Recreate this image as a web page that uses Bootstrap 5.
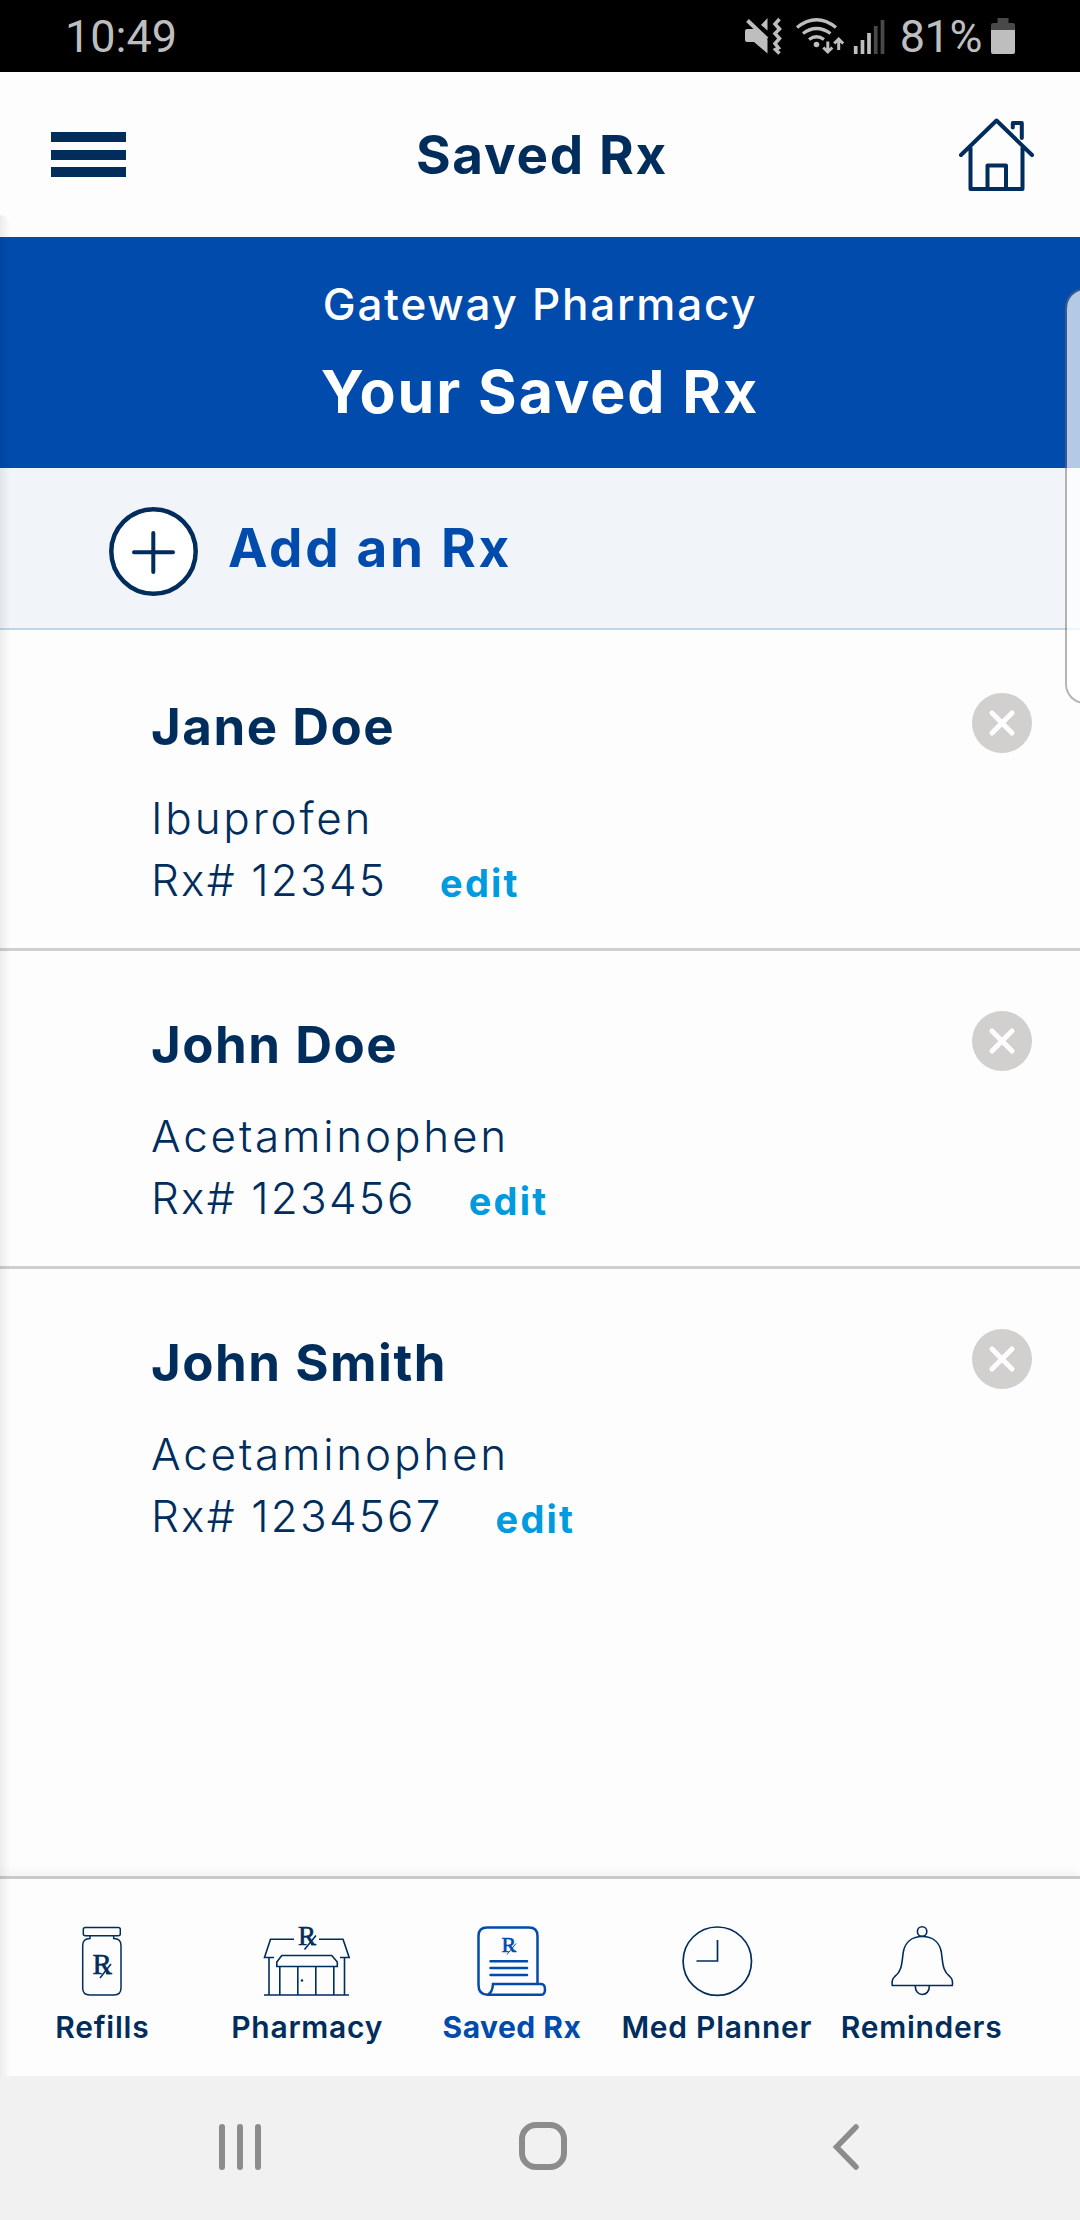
<!DOCTYPE html>
<html lang="en">
<head>
<meta charset="utf-8">
<meta name="viewport" content="width=device-width, initial-scale=1">
<title>Saved Rx</title>
<link href="https://cdn.jsdelivr.net/npm/bootstrap@5.3.0/dist/css/bootstrap.min.css" rel="stylesheet">
<style>
  :root { --navy: #002d5c; --blue: #004bac; --sky: #009ade; }
  body { font-family: Inter, "Open Sans", sans-serif; color: var(--navy); background: #fdfdfd; }
  svg { display: block; flex: none; overflow: visible; }
  .phone { width: 1080px; height: 2220px; overflow: hidden; background: #fdfdfd; }
  .status-bar { height: 72px; background: #000; color: #bebebe; font: 400 45px/46px Roboto, sans-serif; padding: 0 65px 0 65px; }
  .status-text { padding-top: 14px; }
  .status-percent { margin-left: 15px; letter-spacing: -.4px; }
  .status-icons { margin-top: 16px; }
  .status-battery { margin: 18px 0 0 9px; }
  .title-bar { height: 165px; padding: 0 46px 0 51px; }
  .title-bar h1 { font-size: 53px; line-height: 60px; font-weight: 700; letter-spacing: 1.7px; }
  .burger { width: 75px; height: 45px; }
  .burger span { height: 10px; background: var(--navy); }
  .hero { height: 231px; padding-top: 37px; background: var(--blue); }
  .hero-store { font-size: 44px; line-height: 60px; font-weight: 500; letter-spacing: 1.75px; }
  .hero-title { font-size: 59px; line-height: 70px; font-weight: 700; letter-spacing: 1.95px; margin-top: 23px; }
  .add-band { height: 162px; padding-left: 109px; background: #f1f5fa; border-bottom: 2px solid #bfd6e9; }
  .add-band svg { margin-top: 6px; }
  .add-text { font-size: 53px; line-height: 60px; font-weight: 700; letter-spacing: 2.7px; color: var(--blue); margin-left: 30px; }
  .rx-item { height: 318px; padding: 64px 48px 0 151px; border-bottom: 3px solid #cfcfcf; }
  .rx-item:first-child { height: 321px; padding-top: 67px; }
  .rx-item:last-child { border-bottom: 0; }
  .rx-name { font-size: 51px; line-height: 60px; font-weight: 700; letter-spacing: 1.5px; margin-bottom: 30px; }
  .rx-line { font-size: 44px; line-height: 62px; font-weight: 300; white-space: nowrap; }
  .rx-drug { letter-spacing: 2.8px; }
  .rx-num { letter-spacing: 2.2px; }
  .rx-edit { font-size: 38px; line-height: 40px; font-weight: 700; letter-spacing: 2.2px; color: var(--sky); margin-left: 53px; vertical-align: -1px; text-decoration: none; }
  .rx-remove { width: 60px; height: 60px; border-radius: 50%; background: #d1d0ce; margin-top: -4px; }
  .tab-bar { height: 200px; border-top: 3px solid #c9c9c9; box-shadow: 0 -3px 12px rgba(0,0,0,.05); padding-right: 56px; background: #fdfdfd; }
  .tab-item { flex: 1 1 0; width: 0; padding-top: 44px; font-size: 30px; line-height: 36px; font-weight: 600; letter-spacing: .75px; white-space: nowrap; color: var(--navy); text-decoration: none; }
  .tab-item svg { margin-bottom: 10px; }
  .tab-item.current { color: var(--blue); font-weight: 700; letter-spacing: .5px; }
  .rx-mark { font-family: "Liberation Serif", serif; font-weight: 400; fill: currentColor; stroke: currentColor; stroke-width: .6; letter-spacing: 0; }
  .system-bar { height: 144px; background: #f1f1f1; padding: 0 219px 4px; }
  .system-home { margin-right: 10px; }
  .left-shade { left: 0; top: 215px; width: 10px; height: 1861px; background: linear-gradient(90deg, rgba(0,0,0,.07), transparent); border-top-right-radius: 10px; }
  .edge-panel { left: 1065px; top: 288px; width: 40px; height: 416px; border: 2px solid rgba(110,110,110,.5); border-radius: 21px; background: rgba(255,255,255,.7); background-clip: padding-box; }
</style>
<script src="https://cdn.jsdelivr.net/npm/bootstrap@5.3.0/dist/js/bootstrap.bundle.min.js"></script>
</head>
<body>
<div class="phone position-relative d-flex flex-column">

  <div class="status-bar d-flex justify-content-between align-items-start">
    <div class="status-text">10:49</div>
    <div class="d-flex align-items-start">
      <svg class="status-icons" width="142" height="40" viewBox="742 16 142 40" fill="none" stroke="#bebebe">
        <path d="M746 29h7l1-1 12.500 11.500V53.500L753 42h-7q-2 0-2-2v-9q0-2 2-2zM766.500 18v12.500L760 25z" fill="#bebebe" stroke="none"/>
        <path d="M746.500 20.500L766 39" stroke-width="4"/>
        <path d="M778.500 19l-4.500 5 4.500 5-4.500 4.500 4.500 5-4.500 5 3.500 4.500-3 1.500 4 4" stroke-width="3.500"/>
        <path d="M796 27.500q19.500-15.500 39 0M802 33.500q13.500-10 27.500 0M808 39.500q7.500-5.500 15 0" stroke-width="3.300"/>
        <circle cx="815.500" cy="44.500" r="2.800" fill="#bebebe" stroke="none"/>
        <path d="M826.800 41.500v10M822.300 47.500l4.500 4.500 4.500-4.500M837.700 50V39.500M833.200 43.500l4.500-4.500 4.500 4.500" stroke-width="3"/>
        <path d="M854.700 54v-8M861.500 54V40M868 54V33" stroke-width="3.700"/>
        <path d="M874.700 54V26M881.500 54V20" stroke-width="3.700" stroke="#494949"/>
      </svg>
      <div class="status-text status-percent">81%</div>
      <svg class="status-battery" width="24" height="36" viewBox="991 18 24 36">
        <path d="M997.500 18h11v5h4.500q2 0 2 2v5h-24v-5q0-2 2-2h4.500z" fill="#494949"/>
        <path d="M991 30h24v22q0 2-2 2h-20q-2 0-2-2z" fill="#bebebe"/>
      </svg>
    </div>
  </div>

  <header class="title-bar d-flex justify-content-between align-items-center">
    <div class="burger d-flex flex-column justify-content-between"><span></span><span></span><span></span></div>
    <h1 class="m-0">Saved Rx</h1>
    <svg width="76" height="74" viewBox="958 117 76 74" fill="none" stroke="#002d5c" stroke-width="4" stroke-linecap="round" stroke-linejoin="round">
      <path d="M961 154l35.500-34.500L1032 154M970.500 147v41h52v-41M987.500 187v-22.500h18.500V187M1012.800 126.500v-4.500h9v15"/>
    </svg>
  </header>

  <section class="hero text-white text-center">
    <div class="hero-store">Gateway Pharmacy</div>
    <div class="hero-title">Your Saved Rx</div>
  </section>

  <div class="add-band d-flex align-items-center">
    <svg width="89" height="89" viewBox="0 0 89 89" fill="none" stroke="#002d5c" stroke-linecap="round">
      <circle cx="44.500" cy="44.500" r="42.200" fill="#fff" stroke-width="4.500"/>
      <path d="M25 45.300h39M44.300 26v39" stroke-width="4"/>
    </svg>
    <div class="add-text">Add an Rx</div>
  </div>

  <main class="flex-grow-1">
    <div class="rx-item d-flex justify-content-between">
      <div>
        <div class="rx-name">Jane Doe</div>
        <div class="rx-line rx-drug">Ibuprofen</div>
        <div class="rx-line"><span class="rx-num">Rx# 12345</span><a class="rx-edit">edit</a></div>
      </div>
      <div class="rx-remove d-flex align-items-center justify-content-center">
        <svg width="28" height="28" viewBox="0 0 28 28" stroke="#fff" stroke-width="5" stroke-linecap="round"><path d="M4 4l20 20M24 4L4 24"/></svg>
      </div>
    </div>
    <div class="rx-item d-flex justify-content-between">
      <div>
        <div class="rx-name">John Doe</div>
        <div class="rx-line rx-drug">Acetaminophen</div>
        <div class="rx-line"><span class="rx-num">Rx# 123456</span><a class="rx-edit">edit</a></div>
      </div>
      <div class="rx-remove d-flex align-items-center justify-content-center">
        <svg width="28" height="28" viewBox="0 0 28 28" stroke="#fff" stroke-width="5" stroke-linecap="round"><path d="M4 4l20 20M24 4L4 24"/></svg>
      </div>
    </div>
    <div class="rx-item d-flex justify-content-between">
      <div>
        <div class="rx-name">John Smith</div>
        <div class="rx-line rx-drug">Acetaminophen</div>
        <div class="rx-line"><span class="rx-num">Rx# 1234567</span><a class="rx-edit">edit</a></div>
      </div>
      <div class="rx-remove d-flex align-items-center justify-content-center">
        <svg width="28" height="28" viewBox="0 0 28 28" stroke="#fff" stroke-width="5" stroke-linecap="round"><path d="M4 4l20 20M24 4L4 24"/></svg>
      </div>
    </div>
  </main>

  <nav class="tab-bar d-flex">
    <a class="tab-item d-flex flex-column align-items-center">
      <svg width="92" height="76" viewBox="56 1923 92 76" fill="none" stroke="currentColor" stroke-width="1.500">
        <rect x="83.300" y="1927.500" width="37" height="8.300" rx="2"/>
        <path d="M90 1936v2.500q-7.300 0-7.300 7V1988q0 7 7 7h24.300q7 0 7-7v-42.500q0-7-7.300-7V1936"/>
        <text class="rx-mark" x="92.500" y="1974" font-size="29">R</text>
        <path d="M100 1978l11-14M106 1973.500h5.500"/>
      </svg>
      <span>Refills</span>
    </a>
    <a class="tab-item d-flex flex-column align-items-center">
      <svg width="92" height="76" viewBox="261 1923 92 76" fill="none" stroke="currentColor" stroke-width="1.600">
        <path d="M294 1939.300h-23.500l-6 18.200H274M319 1939.300h24l6.200 18.200H340M269 1958v37M344.500 1958v37M264 1995h85"/>
        <path d="M276.800 1962l5-6.500h50l5.500 6.500v4.500h-60.500zM279.800 1967v28M297.800 1967v28M315.800 1967v28M333.800 1967v28"/>
        <circle cx="302" cy="1980.500" r="1.200" fill="currentColor" stroke="none"/>
        <text class="rx-mark" x="298" y="1945" font-size="27">R</text>
        <path d="M304.500 1949.500l11.500-14M311 1944.500h5"/>
      </svg>
      <span>Pharmacy</span>
    </a>
    <a class="tab-item current d-flex flex-column align-items-center">
      <svg width="92" height="76" viewBox="466 1923 92 76" fill="none" stroke="currentColor" stroke-width="2.500">
        <path d="M537.500 1983.500V1936q0-8.500-8.500-8.500h-42q-8.500 0-8.500 8.500v49q0 9.500 9 9.800 5-2 5.500-10.800h48q4 0 4 5.400t-4 5.400H487"/>
        <path d="M490.500 1961.200h36.500M490.500 1968h36.500M490.500 1975h36.500" stroke-linecap="round"/>
        <text class="rx-mark" x="501.500" y="1951.500" font-size="22">R</text>
        <path d="M507 1954.500l9-11M511.500 1951h4.500" stroke-width="1"/>
      </svg>
      <span>Saved Rx</span>
    </a>
    <a class="tab-item d-flex flex-column align-items-center">
      <svg width="92" height="76" viewBox="671.500 1923 92 76" fill="none" stroke="currentColor" stroke-width="1.700">
        <circle cx="717.800" cy="1961.200" r="34.200"/>
        <path d="M718 1940v21h-21"/>
      </svg>
      <span>Med Planner</span>
    </a>
    <a class="tab-item d-flex flex-column align-items-center">
      <svg width="92" height="76" viewBox="875.700 1923 92 76" fill="none" stroke="currentColor" stroke-width="1.600">
        <circle cx="921.800" cy="1931.500" r="4.700"/>
        <path d="M922 1936.500C910 1936.500 904.500 1944 903 1952C901.500 1962 902 1971 894.500 1976.500C892 1978.500 891.300 1981 892 1985.500H952C952.700 1981 952 1978.500 949.500 1976.500C942 1971 942.500 1962 941 1952C939.500 1944 934 1936.500 922 1936.500zM915 1986c-.5 11 14.500 11.500 14 0"/>
      </svg>
      <span>Reminders</span>
    </a>
  </nav>

  <div class="system-bar d-flex justify-content-between align-items-center">
    <svg width="44" height="48" viewBox="0 0 44 48" stroke="#8c8c8c" stroke-width="6" stroke-linecap="round"><path d="M3 5v40M21 5v40M39 5v40"/></svg>
    <svg class="system-home" width="50" height="50" viewBox="0 0 50 50" fill="none" stroke="#8c8c8c" stroke-width="6"><rect x="4" y="4" width="42" height="42" rx="14"/></svg>
    <svg width="28" height="48" viewBox="0 0 28 48" fill="none" stroke="#8c8c8c" stroke-width="5.500" stroke-linecap="round"><path d="M23 5L3.500 25 23 45"/></svg>
  </div>

  <div class="left-shade position-absolute"></div>
  <div class="edge-panel position-absolute"></div>
</div>
</body>
</html>
